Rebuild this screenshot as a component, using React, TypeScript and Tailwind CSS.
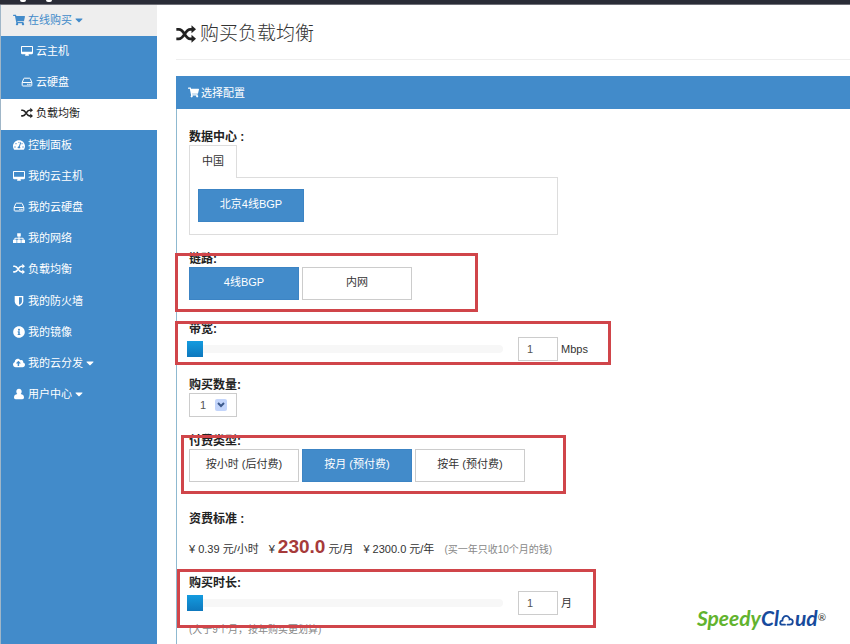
import { useState, type ReactNode } from 'react';
import clsx from 'clsx';
import { FaCaretDown, FaCloudUploadAlt, FaInfoCircle, FaShoppingCart, FaTachometerAlt } from 'react-icons/fa';

type IconProps = { className?: string };

function DesktopIcon({ className }: IconProps) {
  return (
    <svg viewBox="0 0 13 12" className={className} fill="currentColor" fillRule="evenodd">
      <path d="M1.100.600h10.800c.6 0 1.100.5 1.100 1.100v6.600c0 .6-.5 1.100-1.100 1.100H8.200c0 .7.5.9.5 1.300 0 .3-.2.500-.500.500H4.800c-.3 0-.5-.2-.5-.5 0-.4.500-.600.500-1.300H1.100C.5 9.400 0 8.900 0 8.300V1.700C0 1.100.5.600 1.100.600zM1.100 1.600v5.300h10.800V1.600z" />
    </svg>
  );
}

function DriveIcon({ className }: IconProps) {
  return (
    <svg viewBox="0 0 12 12" className={className} fill="none" stroke="currentColor" strokeWidth="1">
      <path d="M1.200 6.500h9.600v2.800c0 .4-.3.700-.7.700H1.900c-.4 0-.7-.3-.7-.7zM1.200 6.500l1.500-3.800c.1-.3.4-.5.7-.5h5.200c.3 0 .6.200.7.500l1.500 3.800" />
      <path d="M6.300 8.300h1.200M8.300 8.300h1.200" strokeWidth="1.200" />
    </svg>
  );
}

function ShuffleIcon({ className }: IconProps) {
  return (
    <svg viewBox="0 0 12 12" className={className}>
      <path
        d="M.2 3.200h1.500C5 3.200 5.400 8.900 8.500 8.900h1.300M.2 8.900h1.500C5 8.900 5.400 3.200 8.500 3.200h1.300"
        fill="none"
        stroke="currentColor"
        strokeWidth="1.600"
      />
      <path d="M9.300.800L12 3.200 9.300 5.600zM9.300 6.500L12 8.900l-2.700 2.400z" fill="currentColor" />
    </svg>
  );
}

function SitemapIcon({ className }: IconProps) {
  return (
    <svg viewBox="0 0 12 12" className={className} fill="currentColor">
      <path d="M4.200 1.200h3.600v3.300H6.500v1.200h3.300c.5 0 .8.300.8.800v1.200H12V11H8.400V7.700h1.200V6.700H6.500v1h1.300V11H4.200V7.700h1.300v-1H2.400v1h1.200V11H0V7.700h1.400V6.500c0-.5.3-.8.8-.8h3.300V4.500H4.200z" />
    </svg>
  );
}

function ShieldIcon({ className }: IconProps) {
  return (
    <svg viewBox="0 0 12 12" className={className} fill="currentColor" fillRule="evenodd">
      <path d="M1.700.900h8.600v5.600c0 2.300-2 3.900-4.300 5-2.300-1.100-4.300-2.700-4.300-5zM6 2.300v7.500c1.600-.9 2.900-1.900 2.900-3.400V2.300z" />
    </svg>
  );
}

function UserIcon({ className }: IconProps) {
  return (
    <svg viewBox="0 0 12 12" className={className} fill="currentColor">
      <path d="M6 .800c1.600 0 2.700 1.200 2.700 2.800 0 1-.4 1.900-1 2.500 2 .3 3.300 1.400 3.300 3.400 0 1-.7 1.700-1.700 1.700H2.700C1.700 11.200 1 10.500 1 9.500c0-2 1.300-3.100 3.300-3.400-.6-.6-1-1.500-1-2.500C3.300 2 4.400.800 6 .800z" />
    </svg>
  );
}

const navItems = [
  { icon: FaShoppingCart, label: '在线购买', caret: true, kind: 'open' },
  { icon: DesktopIcon, label: '云主机', kind: 'sub' },
  { icon: DriveIcon, label: '云硬盘', kind: 'sub' },
  { icon: ShuffleIcon, label: '负载均衡', kind: 'active' },
  { icon: FaTachometerAlt, label: '控制面板' },
  { icon: DesktopIcon, label: '我的云主机' },
  { icon: DriveIcon, label: '我的云硬盘' },
  { icon: SitemapIcon, label: '我的网络' },
  { icon: ShuffleIcon, label: '负载均衡' },
  { icon: ShieldIcon, label: '我的防火墙' },
  { icon: FaInfoCircle, label: '我的镜像' },
  { icon: FaCloudUploadAlt, label: '我的云分发', caret: true },
  { icon: UserIcon, label: '用户中心', caret: true },
];

function Sidebar() {
  return (
    <nav className="w-[157px] shrink-0 border-l border-[#9fb6c8] bg-[#428bca]">
      <ul className="grid h-[406px] auto-rows-fr">
        {navItems.map((item, index) => (
          <li key={index}>
            <a
              href="#"
              className={clsx(
                'flex h-full items-center gap-[3px] pb-0.5',
                item.kind === 'open' && 'bg-[#eeeeee] pl-3 text-[#428bca]',
                item.kind === 'sub' && 'pl-5 text-white',
                item.kind === 'active' && 'bg-white pl-5 text-[#222222]',
                !item.kind && 'pl-3 text-white',
              )}
            >
              <item.icon className="size-3 shrink-0" />
              <span>{item.label}</span>
              {item.caret && <FaCaretDown className="-ml-0.5 size-3" />}
            </a>
          </li>
        ))}
      </ul>
    </nav>
  );
}

function Highlight({ className }: { className: string }) {
  return <span className={clsx('pointer-events-none absolute border-[3px] border-[#d0454a]', className)} />;
}

function Choice({ label, selected, onClick }: { label: string; selected: boolean; onClick: () => void }) {
  return (
    <button
      type="button"
      onClick={onClick}
      className={clsx(
        'h-[33px] w-[110px] border pb-1',
        selected ? 'border-[#3c84c4] bg-[#428bca] text-white' : 'border-[#cccccc] bg-white text-[#333333]',
      )}
    >
      {label}
    </button>
  );
}

function SliderRow({ id, unit, children }: { id: string; unit: string; children: ReactNode }) {
  const [value, setValue] = useState(1);

  return (
    <>
      <label htmlFor={id} className="block text-xs leading-4 font-bold text-[#222222]">
        {children}
      </label>
      <div className="flex h-6 items-center">
        <input
          id={id}
          type="range"
          min={1}
          max={36}
          value={value}
          onChange={(e) => setValue(Number(e.target.value))}
          className="-ml-0.5 h-4 w-[316px] appearance-none bg-transparent [&::-webkit-slider-runnable-track]:h-2 [&::-webkit-slider-runnable-track]:rounded-sm [&::-webkit-slider-runnable-track]:bg-[#f7f7f7] [&::-webkit-slider-thumb]:-mt-1 [&::-webkit-slider-thumb]:size-4 [&::-webkit-slider-thumb]:appearance-none [&::-webkit-slider-thumb]:bg-linear-to-b [&::-webkit-slider-thumb]:from-[#149bdf] [&::-webkit-slider-thumb]:to-[#0e78bd]"
        />
        <input
          type="text"
          aria-label={unit}
          value={value}
          onChange={(e) => setValue(Number(e.target.value) || 1)}
          className="ml-[15px] h-6 w-10 border border-[#cccccc] pl-2 text-[#555555]"
        />
        <span className="ml-[3px]">{unit}</span>
      </div>
    </>
  );
}

function Brand() {
  return (
    <div className="absolute right-6 bottom-3 flex items-baseline font-['Lato','Noto_Sans',sans-serif] text-[21px] leading-7 font-bold italic">
      <span className="text-[#62b32e]">Speedy</span>
      <span className="text-[#174a9c]">Cl</span>
      <svg viewBox="0 0 16 12" className="h-3 w-4" fill="none" stroke="#174a9c" strokeWidth="1.8" strokeLinecap="round">
        <path d="M6 10.7H3.2C.4 10.5.6 7 3.4 6.7 3.3 3 6.500.8 9 2.4c1.200.8 1.700 1.700 1.600 2.900 1.900-.5 3.400.7 3.200 2.600-.1 1.600-1.200 2.700-3 2.800H8.500" />
      </svg>
      <span className="text-[#174a9c]">ud</span>
      <sup className="text-[10px] leading-3 font-normal text-[#333333] not-italic">®</sup>
    </div>
  );
}

export default function App() {
  const [link, setLink] = useState('4线BGP');
  const [billing, setBilling] = useState('按月 (预付费)');

  return (
    <div className="relative flex h-screen flex-col overflow-hidden bg-white font-['Liberation_Sans','Noto_Sans_CJK_SC',sans-serif] text-[11px] leading-4 text-[#333333]">
      <header className="flex h-[5px] shrink-0 items-start gap-5 border-b border-[#6f7078] bg-[#2a2c37] pl-5">
        <span className="h-0.5 w-1.5 rounded-b-full bg-white" />
        <span className="h-0.5 w-1.5 rounded-b-full bg-white" />
      </header>

      <div className="flex min-h-0 flex-1">
        <Sidebar />

        <main className="flex min-w-0 flex-1 flex-col pl-[19px]">
          <h1 className="flex h-[55px] shrink-0 items-center gap-1 border-b border-[#eeeeee] pt-1 text-[19px] font-light">
            <ShuffleIcon className="size-5 text-[#222222]" />
            购买负载均衡
          </h1>

          <section className="mt-4 flex-1 border-l border-[#8fb9d0]">
            <h2 className="-ml-px flex h-[33px] items-center gap-0.5 bg-[#428bca] pl-3 text-white">
              <FaShoppingCart className="size-[11px]" />
              选择配置
            </h2>

            <form className="pt-5 pl-3">
              <div>
                <h3 className="text-xs leading-4 font-bold text-[#222222]">数据中心 :</h3>
                <button
                  type="button"
                  className="relative -mb-px block h-[33px] w-12 border border-b-0 border-[#dddddd] bg-white pb-0.5"
                >
                  中国
                </button>
                <div className="h-[58px] w-[369px] border border-[#dddddd] pt-[11px] pl-2">
                  <button type="button" className="h-[33px] w-[106px] border border-[#3c84c4] bg-[#428bca] pb-1 text-white">
                    北京4线BGP
                  </button>
                </div>
              </div>

              <div className="relative mt-4">
                <h3 className="text-xs leading-4 font-bold text-[#222222]">链路:</h3>
                <div className="flex gap-[3px]">
                  {['4线BGP', '内网'].map((name) => (
                    <Choice key={name} label={name} selected={link === name} onClick={() => setLink(name)} />
                  ))}
                </div>
                <Highlight className="top-0.5 -left-3.5 h-[59px] w-[303px]" />
              </div>

              <div className="relative mt-[21px]">
                <SliderRow id="bandwidth" unit="Mbps">
                  带宽:
                </SliderRow>
                <Highlight className="top-0 -left-3.5 h-11 w-[436px]" />
              </div>

              <div className="mt-4">
                <label htmlFor="amount" className="block text-xs leading-4 font-bold text-[#222222]">
                  购买数量:
                </label>
                <div className="relative h-6 w-12">
                  <select id="amount" className="h-6 w-12 appearance-none border border-[#cccccc] bg-white pl-2.5 text-[#555555]">
                    <option>1</option>
                    <option>2</option>
                    <option>3</option>
                  </select>
                  <span className="pointer-events-none absolute top-1.5 right-2.5 flex size-3 items-center justify-center rounded-xs bg-[#c3d5fb]">
                    <svg viewBox="0 0 8 6" className="h-1.5 w-2" fill="none" stroke="#3d5a8c" strokeWidth="2">
                      <path d="M1 1l3 3 3-3" />
                    </svg>
                  </span>
                </div>
              </div>

              <div className="relative mt-4">
                <h3 className="text-xs leading-4 font-bold text-[#222222]">付费类型:</h3>
                <div className="flex gap-[3px]">
                  {['按小时 (后付费)', '按月 (预付费)', '按年 (预付费)'].map((name) => (
                    <Choice key={name} label={name} selected={billing === name} onClick={() => setBilling(name)} />
                  ))}
                </div>
                <Highlight className="top-0.5 -left-2 h-[59px] w-[385px]" />
              </div>

              <div className="mt-[29px]">
                <h3 className="text-xs leading-4 font-bold text-[#222222]">资费标准 :</h3>
                <p className="mt-2 flex h-6 items-baseline leading-6">
                  <span>¥ 0.39 元/小时</span>
                  <span className="ml-2.5">¥</span>
                  <strong className="mx-[3px] text-[19px] leading-6 text-[#a63a3a]">230.0</strong>
                  <span>元/月</span>
                  <span className="ml-2.5">¥ 2300.0 元/年</span>
                  <span className="ml-2.5 text-[10px] text-[#888888]">(买一年只收10个月的钱)</span>
                </p>
              </div>

              <div className="relative mt-4">
                <SliderRow id="duration" unit="月">
                  购买时长:
                </SliderRow>
                <p className="mt-[7px] text-[10px] text-[#888888]">(大于9个月，按年购买更划算)</p>
                <Highlight className="-top-1.5 -left-3 h-[59px] w-[419px]" />
              </div>
            </form>
          </section>
        </main>
      </div>

      <Brand />
    </div>
  );
}
